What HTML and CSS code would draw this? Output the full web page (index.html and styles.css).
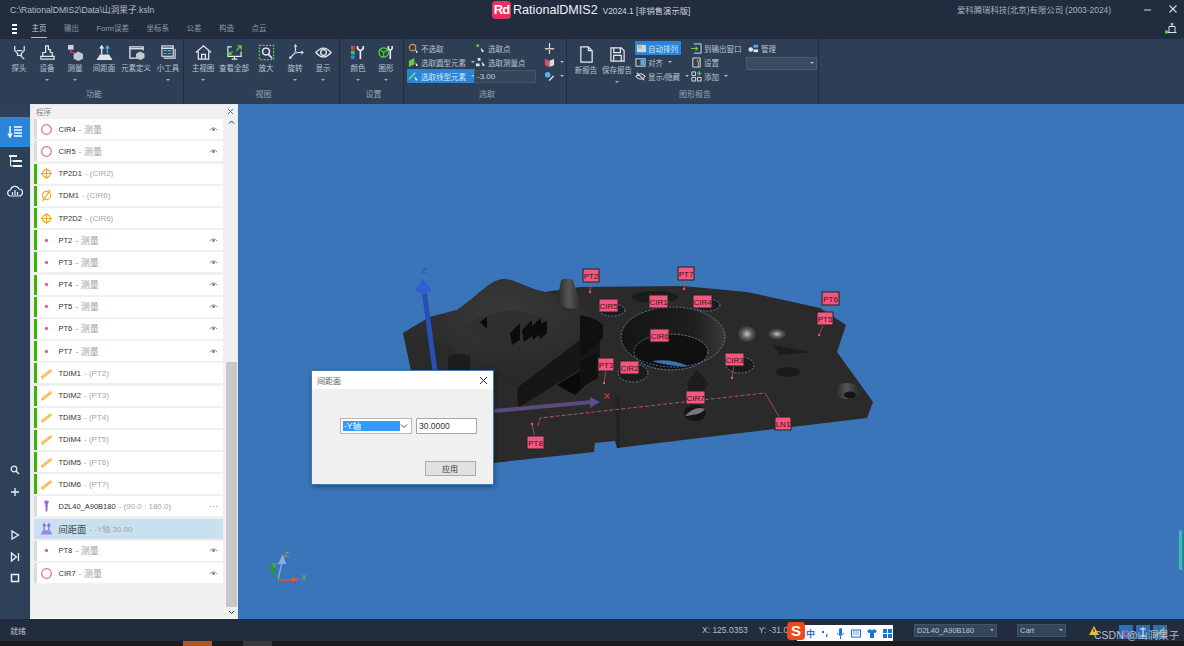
FILE: index.html
```html
<!DOCTYPE html>
<html lang="zh">
<head>
<meta charset="utf-8">
<title>RationalDMIS2</title>
<link rel="stylesheet" href="styles.css">
</head>
<body>
<svg class="defs" width="0" height="0" aria-hidden="true">
  <symbol id="i-ring" viewBox="0 0 14 14"><circle cx="7" cy="7" r="5.2" fill="none" stroke="#e4708e" stroke-width="1.3"/></symbol>
  <symbol id="i-tp" viewBox="0 0 14 14"><g fill="none" stroke="#f5a81c" stroke-width="1.2"><circle cx="7" cy="7" r="4.2"/><path d="M7 .8v12.4M.8 7h12.4"/></g></symbol>
  <symbol id="i-dia" viewBox="0 0 14 14"><g fill="none" stroke="#f5a81c" stroke-width="1.2"><circle cx="7" cy="7" r="4.4"/><path d="M3 13 11 1"/></g></symbol>
  <symbol id="i-dot" viewBox="0 0 14 14"><circle cx="7" cy="7" r="1.8" fill="#e4608a"/></symbol>
  <symbol id="i-rule" viewBox="0 0 14 14"><path d="M1 11 12 2.5M3 11.6 1.8 10M5 10 3.8 8.4M7 8.4 5.8 6.8M9 6.8 7.8 5.2M11 5.2 9.8 3.6M2 12.4 13 4" fill="none" stroke="#f5b030" stroke-width="1.1"/></symbol>
  <symbol id="i-probe" viewBox="0 0 14 14"><path d="M5 1h4L8 5 7.6 12h-1.2L6 5zM4.6 2.4 7 4M9.4 2.4 7 4" fill="#a070e8" stroke="#8a5ad8" stroke-width=".6"/></symbol>
  <symbol id="i-space" viewBox="0 0 14 14"><path d="M1 12h12v1.4H1zM3 9h8l1.4 3H1.6z" fill="#a57ce8"/><path d="M4.5 9V3M3 4.4 4.5 2 6 4.4M9.5 9V3M8 4.4 9.5 2 11 4.4" fill="none" stroke="#8d62dc" stroke-width="1.2"/></symbol>
  <symbol id="i-eye" viewBox="0 0 14 10"><path d="M1 6Q7-1 13 6" fill="none" stroke="#777" stroke-width="1.3"/><circle cx="7" cy="5.4" r="2" fill="#777"/></symbol>
</svg>

<header class="titlebar">
  <span class="path">C:\RationalDMIS2\Data\山洞果子.ksln</span>
  <div class="brand">
    <span class="logo">Rd</span>
    <span class="appname">RationalDMIS2</span>
    <span class="version">V2024.1 [非销售演示版]</span>
  </div>
  <span class="company">爱科腾瑞科技(北京)有限公司 (2003-2024)</span>
  <svg class="winbtn min" width="10" height="10" viewBox="0 0 10 10"><path d="M1 6h7" stroke="#b9c1cc" stroke-width="1.2"/></svg>
  <svg class="winbtn" width="10" height="10" viewBox="0 0 10 10"><path d="M1.5 1.5 8.5 8.5M8.5 1.5 1.5 8.5" stroke="#d5dae1" stroke-width="1.1"/></svg>
</header>

<nav class="tabs">
  <span class="burger"><i></i><i></i><i></i></span>
  <span class="tab active">主页</span>
  <span class="tab">输出</span>
  <span class="tab">Form误差</span>
  <span class="tab">坐标系</span>
  <span class="tab">公差</span>
  <span class="tab">构造</span>
  <span class="tab">点云</span>
  <svg class="tab-end" width="12" height="12" viewBox="0 0 12 12"><path d="M3 10.5h8.5M4 10V4.5h6V10M7 4.5V1M5.5 2h3" fill="none" stroke="#dfe5ec" stroke-width="1"/><rect x="0" y="8.5" width="3.4" height="3" fill="#48d830"/></svg>
</nav>

<section class="ribbon">
  <div class="group g-func">
    <div class="items">
      <div class="rb w28"><svg class="ic" viewBox="0 0 18 18"><path d="M4 2v5l3 3v2h4v-2l3-3V2M6 7h6M10 12l4 4" fill="none" stroke="#dfe6ee" stroke-width="1.3"/></svg><span>探头</span></div>
      <div class="rb w28 more"><svg class="ic" viewBox="0 0 18 18"><path d="M2 16h14v-3H2zM4 13V9h3V2h3v4h2v3h2v4" fill="none" stroke="#dfe6ee" stroke-width="1.3"/></svg><span>设备</span></div>
      <div class="rb w28 more"><svg class="ic" viewBox="0 0 18 18"><rect x="1" y="1" width="6" height="5" fill="#ccd2da"/><path d="M4 6v3h4" fill="none" stroke="#e4405e" stroke-width="1.2"/><path d="M12 8l5 2.5v5L12 18l-5-2.500v-5z" fill="#c4c9d0"/></svg><span>测量</span></div>
      <div class="rb w30"><svg class="ic" viewBox="0 0 18 18"><path d="M1 15h16v2H1zM4 11h10l2 4H2z" fill="#dfe6ee"/><path d="M6 11V3M4 5l2-3 2 3" fill="none" stroke="#dfe6ee" stroke-width="1.4"/><path d="M12 10V3M10 5l2-3 2 3" fill="none" stroke="#4aa8f0" stroke-width="1.4"/></svg><span>间距面</span></div>
      <div class="rb w34"><svg class="ic" viewBox="0 0 18 18"><path d="M10 15H2V3h14v4" fill="none" stroke="#dfe6ee" stroke-width="1.4"/><path d="M2 5h14" stroke="#dfe6ee" stroke-width="1.4"/><path d="M13 8l4.500 2.300v4.400L13 17l-4.500-2.300v-4.400z" fill="#c4c9d0"/></svg><span>元素定义</span></div>
      <div class="rb w30 more"><svg class="ic" viewBox="0 0 18 18"><rect x="2" y="2" width="12" height="11" fill="none" stroke="#dfe6ee" stroke-width="1.2"/><path d="M2 4.500h12" stroke="#dfe6ee" stroke-width="1.6"/><path d="M4 7h3M8 7h4M4 10h3M8 10h4" stroke="#58b0f0" stroke-width="1.2"/><path d="M16 5v10H4" fill="none" stroke="#dfe6ee" stroke-width="1.200"/></svg><span>小工具</span></div>
    </div>
    <div class="glabel">功能</div>
  </div>
  <div class="group g-view">
    <div class="items">
      <div class="rb w30 more"><svg class="ic" viewBox="0 0 18 18"><path d="M1 9 9 2l8 7M3.500 8v8h11V8M7 16v-5h4v5" fill="none" stroke="#e6ebf1" stroke-width="1.300"/></svg><span>主视图</span></div>
      <div class="rb w32"><svg class="ic" viewBox="0 0 18 18"><path d="M6 3H2v10h14V8M6 16h6M9 13v3" fill="none" stroke="#dfe6ee" stroke-width="1.300"/><path d="M11 7l5-5M12 2h4v4M7 8l-4 3M3 8v3h3" fill="none" stroke="#58d838" stroke-width="1.300"/></svg><span>查看全部</span></div>
      <div class="rb w32"><svg class="ic" viewBox="0 0 18 18"><rect x="1.500" y="1.500" width="15" height="15" fill="none" stroke="#58d838" stroke-width="1.300" stroke-dasharray="2 1.500"/><circle cx="8.500" cy="8" r="3.600" fill="none" stroke="#e6ebf1" stroke-width="1.500"/><path d="M11 11l4 4" stroke="#e6ebf1" stroke-width="1.600"/></svg><span>放大</span></div>
      <div class="rb w26 more"><svg class="ic" viewBox="0 0 18 18"><path d="M9 3v6M9 9l6 0M9 9l-5 5" fill="none" stroke="#dfe6ee" stroke-width="1.200"/><path d="M9 0 7 3h4zM18 9l-3-2v4zM2 16l1-3.500 2.500 2.500z" fill="#dfe6ee"/><circle cx="9" cy="9" r="1.700" fill="#58b0f0"/></svg><span>旋转</span></div>
      <div class="rb w30 more"><svg class="ic" viewBox="0 0 18 18"><path d="M1 9Q9-.500 17 9 9 18.500 1 9z" fill="none" stroke="#e6ebf1" stroke-width="1.300"/><circle cx="9" cy="9" r="3" fill="none" stroke="#e6ebf1" stroke-width="1.400"/></svg><span>显示</span></div>
    </div>
    <div class="glabel">视图</div>
  </div>
  <div class="group g-set">
    <div class="items">
      <div class="rb w28 more"><svg class="ic" viewBox="0 0 18 18"><rect x="1" y="2" width="4" height="4" fill="#e04040"/><rect x="1" y="7" width="4" height="4" fill="#40c840"/><rect x="1" y="12" width="4" height="4" fill="#3080e8"/><path d="M8 2v3l3 2 3-2V2M11 7v9" fill="none" stroke="#e6ebf1" stroke-width="1.800"/></svg><span>颜色</span></div>
      <div class="rb w28 more"><svg class="ic" viewBox="0 0 18 18"><circle cx="6" cy="9" r="5" fill="none" stroke="#58d838" stroke-width="1.300"/><path d="M2 6l4 3 4-3M6 9v5" fill="none" stroke="#58d838" stroke-width="1.100"/><path d="M11 2v3l2 2 2-2V2M13 7v9" fill="none" stroke="#e6ebf1" stroke-width="1.700"/></svg><span>图形</span></div>
    </div>
    <div class="glabel">设置</div>
  </div>
  <div class="group g-pick">
    <div class="items pick">
      <div class="col c1">
        <div class="ln"><svg class="mi" viewBox="0 0 12 12"><circle cx="5" cy="5" r="3.500" fill="none" stroke="#d8a030" stroke-width="1.300"/><path d="M8 7l3 3-2 1z" fill="#eee"/></svg>不选取</div>
        <div class="ln dd"><svg class="mi" viewBox="0 0 12 12"><path d="M1 4l6-3v7l-6 3z" fill="#68c848"/><path d="M8 6l3 3-2 1z" fill="#eee"/></svg>选取圆型元素</div>
        <div class="ln dd sel"><svg class="mi" viewBox="0 0 12 12"><path d="M1 9 8 2" stroke="#7ee860" stroke-width="1.500"/><path d="M7 6l3.500 3.500-2 1z" fill="#fff"/></svg>选取线型元素</div>
      </div>
      <div class="col c2">
        <div class="ln"><svg class="mi" viewBox="0 0 12 12"><circle cx="3" cy="3" r="1.600" fill="#68c848"/><path d="M6 5l4 4-2.500 1z" fill="#eee"/></svg>选取点</div>
        <div class="ln"><svg class="mi" viewBox="0 0 12 12"><path d="M3 1h3v3H3zM1 7h4v3H1z" fill="#dfe6ee"/><path d="M7 5l4 4-2.500 1z" fill="#eee"/></svg>选取测量点</div>
        <div class="ln"><span class="field">-3.00</span></div>
      </div>
      <div class="col c3">
        <div class="ln"><svg class="mi" viewBox="0 0 12 12"><path d="M6 0v12M1 6h10" stroke="#e8e8ee" stroke-width="1.200"/><path d="M1 7h10" stroke="#e05050" stroke-width="1.400"/></svg></div>
        <div class="ln dd"><svg class="mi" viewBox="0 0 12 12"><path d="M1 2l5 2v7l-5-2z" fill="#e05068"/><path d="M11 2 6 4v7l5-2z" fill="#d8dce2"/></svg></div>
        <div class="ln dd"><svg class="mi" viewBox="0 0 12 12"><circle cx="4" cy="4" r="3" fill="#58b0f0"/><path d="M5 10l5-5 1 1-5 5z" fill="#e6ebf1"/></svg></div>
      </div>
    </div>
    <div class="glabel">选取</div>
  </div>
  <div class="group g-report">
    <div class="items report">
      <div class="rb w30"><svg class="ic" viewBox="0 0 18 18"><path d="M3 1h8l4 4v12H3zM11 1v4h4" fill="none" stroke="#e6ebf1" stroke-width="1.300"/></svg><span>新报告</span></div>
      <div class="rb w32 more"><svg class="ic" viewBox="0 0 18 18"><path d="M2 2h11l3 3v11H2zM5 2v5h7V2M5 16v-6h8v6" fill="none" stroke="#e6ebf1" stroke-width="1.300"/></svg><span>保存报告</span></div>
      <div class="col c4">
        <div class="ln active"><svg class="mi" viewBox="0 0 12 12"><rect x="1" y="2" width="10" height="8" fill="#c8d8e8"/><rect x="2" y="3" width="4" height="3" fill="#e0b040"/></svg>自动排列</div>
        <div class="ln dd"><svg class="mi" viewBox="0 0 12 12"><rect x="1" y="2" width="10" height="8" fill="none" stroke="#dfe6ee"/><rect x="6" y="3" width="4" height="6" fill="#58b0f0"/></svg>对齐</div>
        <div class="ln dd"><svg class="mi" viewBox="0 0 12 12"><path d="M1 6Q6 0 11 6 6 12 1 6zM2 2l8 8" fill="none" stroke="#dfe6ee" stroke-width="1.100"/></svg>显示/隐藏</div>
      </div>
      <div class="col c5">
        <div class="ln"><svg class="mi" viewBox="0 0 12 12"><path d="M3 1h8v10H3" fill="none" stroke="#dfe6ee"/><path d="M0 6h7M5 4l2 2-2 2" fill="none" stroke="#58d838" stroke-width="1.200"/></svg>到输出窗口</div>
        <div class="ln"><svg class="mi" viewBox="0 0 12 12"><path d="M2 1h8v10H2z" fill="none" stroke="#dfe6ee"/><path d="M7 3v2l1 1 1-1V3M8 6v5" stroke="#e8c040" fill="none"/></svg>设置</div>
        <div class="ln dd"><svg class="mi" viewBox="0 0 12 12"><path d="M1 1h4v4H1zM1 7h4v4H1zM7 7h4v4H7z" fill="none" stroke="#dfe6ee"/><path d="M9 0v5M6.500 2.500h5" stroke="#58d838" stroke-width="1.200"/></svg>添加</div>
      </div>
      <div class="col c6">
        <div class="ln"><svg class="mi" viewBox="0 0 12 12"><circle cx="3" cy="7" r="2.500" fill="#dfe6ee"/><rect x="6" y="2" width="5" height="3" fill="#58b0f0"/><rect x="6" y="7" width="5" height="3" fill="#dfe6ee"/></svg>管理</div>
        <div class="ln"><span class="combo-r"></span></div>
      </div>
    </div>
    <div class="glabel">图形报告</div>
  </div>
</section>

<main class="work">
  <aside class="rail">
    <div class="rail-top">
      <div class="rail-btn on"><svg width="16" height="14" viewBox="0 0 16 14"><path d="M3 1v10M1 8.500 3 12l2-3.500" fill="none" stroke="#fff" stroke-width="1.400"/><path d="M7 2h8M7 5h8M7 8h8M7 11h8" stroke="#fff" stroke-width="1.500"/></svg></div>
      <div class="rail-btn"><svg width="14" height="14" viewBox="0 0 14 14"><path d="M1 1h8v2H1zM5 6h9v2H5zM5 11h9v2H5z" fill="#eef2f6"/><path d="M2.500 3v9H5M2.500 7H5" fill="none" stroke="#eef2f6"/></svg></div>
      <div class="rail-btn"><svg width="16" height="12" viewBox="0 0 16 12"><path d="M4 11a3 3 0 0 1-.500-6A4.500 4.500 0 0 1 12 4a3.500 3.500 0 0 1 0 7z" fill="none" stroke="#eef2f6" stroke-width="1.200"/><path d="M5.500 10V7M8 10V5M10.500 10V7" stroke="#eef2f6" stroke-width="1.200"/></svg></div>
    </div>
    <div class="rail-bottom">
      <svg class="r1" width="10" height="10" viewBox="0 0 10 10"><circle cx="4" cy="4" r="2.800" fill="none" stroke="#dde3ea" stroke-width="1.300"/><path d="M6 6l3 3" stroke="#dde3ea" stroke-width="1.500"/></svg>
      <svg class="r2" width="10" height="10" viewBox="0 0 10 10"><path d="M5 1v8M1 5h8" stroke="#eef2f6" stroke-width="1.300"/></svg>
      <svg class="r3" width="10" height="10" viewBox="0 0 10 10"><path d="M2 1 8.500 5 2 9z" fill="none" stroke="#eef2f6" stroke-width="1.300"/></svg>
      <svg class="r4" width="10" height="10" viewBox="0 0 10 10"><path d="M1.500 1 6.500 5 1.500 9zM8.500 1v8" fill="none" stroke="#eef2f6" stroke-width="1.300"/></svg>
      <svg class="r4" width="10" height="10" viewBox="0 0 10 10"><rect x="1.500" y="1.500" width="7" height="7" fill="none" stroke="#eef2f6" stroke-width="1.500"/></svg>
    </div>
  </aside>

  <section class="panel">
    <div class="panel-head"><span>程序</span><svg width="7" height="7" viewBox="0 0 7 7"><path d="M1 1l5 5M6 1 1 6" stroke="#3a78b0" stroke-width="1"/></svg></div>
    <div class="panel-body">
      <div class="list">
        <div class="row"><svg class="ri"><use href="#i-ring"/></svg><b>CIR4</b><em>- 测量</em><svg class="eye"><use href="#i-eye"/></svg></div>
        <div class="row"><svg class="ri"><use href="#i-ring"/></svg><b>CIR5</b><em>- 测量</em><svg class="eye"><use href="#i-eye"/></svg></div>
        <div class="row ok"><svg class="ri"><use href="#i-tp"/></svg><b>TP2D1</b><i>- (CIR2)</i></div>
        <div class="row ok"><svg class="ri"><use href="#i-dia"/></svg><b>TDM1</b><i>- (CIR6)</i></div>
        <div class="row ok"><svg class="ri"><use href="#i-tp"/></svg><b>TP2D2</b><i>- (CIR6)</i></div>
        <div class="row ok"><svg class="ri"><use href="#i-dot"/></svg><b>PT2</b><em>- 测量</em><svg class="eye"><use href="#i-eye"/></svg></div>
        <div class="row ok"><svg class="ri"><use href="#i-dot"/></svg><b>PT3</b><em>- 测量</em><svg class="eye"><use href="#i-eye"/></svg></div>
        <div class="row ok"><svg class="ri"><use href="#i-dot"/></svg><b>PT4</b><em>- 测量</em><svg class="eye"><use href="#i-eye"/></svg></div>
        <div class="row ok"><svg class="ri"><use href="#i-dot"/></svg><b>PT5</b><em>- 测量</em><svg class="eye"><use href="#i-eye"/></svg></div>
        <div class="row ok"><svg class="ri"><use href="#i-dot"/></svg><b>PT6</b><em>- 测量</em><svg class="eye"><use href="#i-eye"/></svg></div>
        <div class="row ok"><svg class="ri"><use href="#i-dot"/></svg><b>PT7</b><em>- 测量</em><svg class="eye"><use href="#i-eye"/></svg></div>
        <div class="row ok"><svg class="ri"><use href="#i-rule"/></svg><b>TDIM1</b><i>- (PT2)</i></div>
        <div class="row ok"><svg class="ri"><use href="#i-rule"/></svg><b>TDIM2</b><i>- (PT3)</i></div>
        <div class="row ok"><svg class="ri"><use href="#i-rule"/></svg><b>TDIM3</b><i>- (PT4)</i></div>
        <div class="row ok"><svg class="ri"><use href="#i-rule"/></svg><b>TDIM4</b><i>- (PT5)</i></div>
        <div class="row ok"><svg class="ri"><use href="#i-rule"/></svg><b>TDIM5</b><i>- (PT6)</i></div>
        <div class="row ok"><svg class="ri"><use href="#i-rule"/></svg><b>TDIM6</b><i>- (PT7)</i></div>
        <div class="row"><svg class="ri"><use href="#i-probe"/></svg><b>D2L40_A90B180</b><i>- (90.0 : 180.0)</i><span class="dots">···</span></div>
        <div class="row cur"><svg class="ri"><use href="#i-space"/></svg><strong>间距面</strong><i>- -Y轴 30.00</i></div>
        <div class="row"><svg class="ri"><use href="#i-dot"/></svg><b>PT8</b><em>- 测量</em><svg class="eye"><use href="#i-eye"/></svg></div>
        <div class="row"><svg class="ri"><use href="#i-ring"/></svg><b>CIR7</b><em>- 测量</em><svg class="eye"><use href="#i-eye"/></svg></div>
      </div>
      <div class="scroll">
        <svg class="sb-arrow" width="11" height="11" viewBox="0 0 11 11"><path d="M3 6.500 5.500 4 8 6.500" fill="none" stroke="#333" stroke-width="1"/></svg>
        <div class="sb-track"><div class="sb-thumb"></div></div>
        <svg class="sb-arrow" width="11" height="11" viewBox="0 0 11 11"><path d="M3 4 5.500 6.500 8 4" fill="none" stroke="#333" stroke-width="1"/></svg>
      </div>
    </div>
  </section>

  <section class="viewport">
    <svg class="scene" viewBox="238 104 946 515" width="946" height="515">
      <defs>
        <radialGradient id="g-bump" cx=".5" cy=".25" r=".7"><stop offset="0" stop-color="#383838"/><stop offset="1" stop-color="#282828"/></radialGradient>
        <linearGradient id="g-cone" x1="0" x2="1"><stop offset="0" stop-color="#262626"/><stop offset=".5" stop-color="#555"/><stop offset="1" stop-color="#2a2a2a"/></linearGradient>
        <radialGradient id="g-ball" cx=".5" cy=".5" r=".5"><stop offset="0" stop-color="#c4c4c4"/><stop offset=".5" stop-color="#5e5e5e"/><stop offset="1" stop-color="#262626"/></radialGradient>
        <linearGradient id="g-hole" x1="0" x2="1"><stop offset="0" stop-color="#151515"/><stop offset=".7" stop-color="#1e1e1e"/><stop offset="1" stop-color="#3a3a3a"/></linearGradient>
      </defs>
      <path d="M403 333 430 317 457 310C475 298 490 280 503 279 515 279 530 290 545 292L580 287 683 286 747 292 820 308 846 325 837 352 873 402 867 418 617 448 615 441 595 443 594 452 493 463 440 470 415 390Z" fill="#2a2a2a"/>
      <path d="M403 333 430 317 457 310C475 298 490 280 503 279 515 279 530 290 545 292L575 300 600 322 517 388C500 378 470 370 450 345Z" fill="url(#g-bump)"/>
      <path d="M517 388 600 325V357L518 408Z" fill="#161616"/>
      <path d="M557 385 598 360V373L575 395Z" fill="#0a0a0a"/>
      <path d="M580 315Q595 317 603 325V338L580 358Z" fill="#101010"/>
      <path d="M580 362 598 352V378L580 388Z" fill="#101010"/>
      <path d="M468 325 480 317 510 310 545 317 548 330 520 345 490 342Z" fill="#2f2f2f"/>
      <path d="M480 322 487 317V329ZM510 333 520 323V340L512 345ZM522 330 532 320V336L524 342ZM531 327 541 318V333L533 340ZM537 325 547 321V333L540 339Z" fill="#0b0b0b"/>
      <path d="M557 302 561 280Q567 277 573 280L581 307Q568 312 557 302Z" fill="url(#g-cone)"/>
      <path d="M448 356Q459 352 470 356V372H448Z" fill="#1c1c1c"/>
      <path d="M617 448 615 396 620 395 620 448Z" fill="#232323"/>
      <ellipse cx="655" cy="297" rx="23" ry="6" fill="#1b1b1b"/>
      <ellipse cx="673" cy="337" rx="52" ry="30" fill="url(#g-hole)"/>
      <ellipse cx="671" cy="352" rx="37" ry="17" fill="#101010"/>
      <path d="M652 361Q670 358 688 366 670 367 652 361Z" fill="#3b75b9"/>
      <ellipse cx="673" cy="337" rx="52" ry="30" class="dash-b"/>
      <ellipse cx="671" cy="352" rx="37" ry="18" class="dash-b"/>
      <ellipse cx="612" cy="310" rx="13" ry="6" fill="#1b1b1b" class="dash-b"/>
      <ellipse cx="707" cy="305" rx="13" ry="6" fill="#1b1b1b" class="dash-b"/>
      <ellipse cx="633" cy="373" rx="15" ry="9" fill="#1b1b1b" class="dash-b"/>
      <ellipse cx="740" cy="365" rx="14" ry="8" fill="#1b1b1b" class="dash-b"/>
      <ellipse cx="788" cy="372" rx="12" ry="5" fill="#1a1a1a"/>
      <ellipse cx="747" cy="334" rx="10" ry="9" fill="url(#g-ball)"/>
      <ellipse cx="777" cy="334" rx="10" ry="6" fill="url(#g-ball)"/>
      <path d="M773 345 812 352 780 355Z" fill="#1c1c1c"/>
      <ellipse cx="847" cy="391" rx="12" ry="8" fill="url(#g-cone)"/>
      <ellipse cx="850" cy="395" rx="6" ry="3.500" fill="#141414"/>
      <path d="M687 382 697 370 708 383 702 396 690 396Z" fill="#1c1c1c"/>
      <ellipse cx="695" cy="413" rx="11" ry="8" fill="#151515"/>
      <path d="M685 416Q695 405 705 409 702 414 692 415 688 416 685 416Z" fill="#777"/>

      <path d="M424 290 435 371" stroke="#2650b8" stroke-width="5"/>
      <path d="M415 290 423 279 431 290 424 295Z" fill="#2f5fd0"/>
      <text class="axis-z" x="424" y="273">Z</text>
      <path d="M493 411 592 402" stroke="#5a4a80" stroke-width="4"/>
      <path d="M590 397 600 402 590 408Z" fill="#56508c"/>
      <path d="M604.500 393.500 609.500 398.500M609.500 393.500 604.500 398.500" stroke="#c83040" stroke-width="1.200"/>

      <path d="M538 426 540 418 765 393" class="dash-p"/>
      <path d="M765 393 780 418M532 424 535 437M591 281 590 292M686 279 684 289M830 303 825 318M824 323 819 335M734 365 732 378M606 369 604 383" class="lead"/>
      <circle cx="590" cy="292" r="1.200" fill="#e05878"/><circle cx="684" cy="289" r="1.200" fill="#e05878"/><circle cx="819" cy="335" r="1.200" fill="#e05878"/><circle cx="732" cy="378" r="1.200" fill="#e05878"/><circle cx="604" cy="383" r="1.200" fill="#e05878"/><circle cx="532" cy="424" r="1.200" fill="#e05878"/>

      <g class="tag">
        <rect x="583" y="269" width="16" height="13"/><text x="591" y="278.500">PT2</text>
        <rect x="678" y="267" width="16" height="13"/><text x="686" y="276.500">PT7</text>
        <rect x="599" y="299" width="19" height="13"/><text x="608.500" y="308.500">CIR5</text>
        <rect x="649" y="295" width="19" height="13"/><text x="658.500" y="304.500">CIR1</text>
        <rect x="693" y="295" width="19" height="13"/><text x="702.500" y="304.500">CIR4</text>
        <rect x="822" y="292" width="17" height="13"/><text x="830.500" y="301.500">PT6</text>
        <rect x="817" y="312" width="16" height="13"/><text x="825" y="321.500">PT5</text>
        <rect x="650" y="329" width="19" height="13"/><text x="659.500" y="338.500">CIR6</text>
        <rect x="598" y="358" width="16" height="13"/><text x="606" y="367.500">PT3</text>
        <rect x="620" y="361" width="19" height="13"/><text x="629.500" y="370.500">CIR2</text>
        <rect x="725" y="353" width="19" height="13"/><text x="734.500" y="362.500">CIR3</text>
        <rect x="686" y="391" width="19" height="13"/><text x="695.500" y="400.500">CIR7</text>
        <rect x="775" y="417" width="16" height="13"/><text x="783" y="426.500">LN1</text>
        <rect x="527" y="436" width="17" height="13"/><text x="535.500" y="445.500">PT8</text>
      </g>

      <path d="M278 580 282 562" stroke="#7fa4e8" stroke-width="1.500"/>
      <path d="M278 564 283 554 286 564Z" fill="#86aef0"/>
      <path d="M278 580 273 570" stroke="#2c9a3c" stroke-width="1.500"/>
      <path d="M270 567 273 563 276 572 271 573Z" fill="#1c9a30"/>
      <path d="M278 580H294" stroke="#d0583a" stroke-width="1.500"/>
      <path d="M292 577 300 579.500 292 582Z" fill="#ea5424"/>
      <text class="tri" x="284" y="557">Z</text><text class="tri" x="274" y="568" text-anchor="middle">Y</text><text class="tri" x="301" y="580">X</text>
      <rect x="1179" y="530" width="3" height="40" rx="1.500" fill="#35c0a8"/>
    </svg>

    <div class="dialog">
      <div class="dlg-head"><span>间距面</span><svg width="9" height="9" viewBox="0 0 9 9"><path d="M1 1l7 7M8 1 1 8" stroke="#333" stroke-width="1"/></svg></div>
      <div class="dlg-body">
        <div class="dlg-line">
          <div class="dlg-select"><span>-Y轴</span><svg width="8" height="6" viewBox="0 0 8 6"><path d="M1 1.500 4 4.500 7 1.500" fill="none" stroke="#555"/></svg></div>
          <div class="dlg-input">30.0000</div>
        </div>
        <div class="dlg-foot"><button class="dlg-btn" type="button">应用</button></div>
      </div>
    </div>
  </section>
</main>

<footer class="status">
  <span class="st-ready">就绪</span>
  <div class="st-coords"><span>X: 125.0353</span><span>Y: -31.0</span></div>
  <span class="combo wide">D2L40_A90B180</span>
  <span class="combo narrow">Cart</span>
  <div class="st-tail">
    <svg class="warn" width="10" height="9" viewBox="0 0 10 9"><path d="M5 0 10 9H0Z" fill="#f0c020"/><path d="M5 3v3" stroke="#222"/></svg>
    <span class="mark">CSDN @山洞果子</span>
    <div class="tray">
      <span class="tray-b"><svg width="12" height="12" viewBox="0 0 12 12"><path d="M2 10h8M4 10V5h4v5" stroke="#e05a78" fill="none"/></svg></span>
      <span class="tray-b"><svg width="12" height="12" viewBox="0 0 12 12"><path d="M6 1v10M3 10h6M3 3h6" stroke="#e8f0f8" fill="none"/></svg></span>
      <span class="tray-b"><svg width="12" height="12" viewBox="0 0 12 12"><path d="M2 10 10 2" stroke="#70e060" stroke-width="1.500"/></svg></span>
    </div>
  </div>
  <div class="ime">
    <span class="ime-logo">S</span>
    <span class="ime-zh">中</span>
    <svg width="9" height="9" viewBox="0 0 9 9"><circle cx="2" cy="3" r="1.200" fill="#1c70d8"/><path d="M6 5 5.500 8" stroke="#1c70d8" stroke-width="1.400"/></svg>
    <svg width="9" height="11" viewBox="0 0 9 11"><rect x="3" y="0" width="3" height="7" rx="1.500" fill="#1c70d8"/><path d="M1 5q3.500 5 7 0M4.500 8v3" fill="none" stroke="#1c70d8"/></svg>
    <svg width="10" height="9" viewBox="0 0 10 9"><rect x=".5" y="1" width="9" height="7" fill="none" stroke="#1c70d8"/><path d="M2 3h6M2 5h6" stroke="#1c70d8" stroke-dasharray="1 .6"/></svg>
    <svg width="10" height="9" viewBox="0 0 10 9"><path d="M3 0 0 2l1.500 2L3 3.500V9h4V3.500L8.500 4 10 2 7 0 5 1.500Z" fill="#1c70d8"/></svg>
    <svg width="9" height="9" viewBox="0 0 9 9"><path d="M0 0h4v4H0zM5 0h4v4H5zM0 5h4v4H0zM5 5h4v4H5z" fill="#1c70d8"/></svg>
  </div>
</footer>
<div class="strip"><span class="s-orange"></span><span class="s-grey"></span></div>
</body>
</html>
```
FILE: styles.css
```css
* { box-sizing: border-box; }
html, body { margin: 0; padding: 0; }
body {
  width: 1184px;
  height: 646px;
  overflow: hidden;
  display: flex;
  flex-direction: column;
  background: #222c3f;
  font-family: "Liberation Sans", "Noto Sans CJK SC", sans-serif;
  font-size: 8px;
  color: #c4cbd4;
}
.defs { position: absolute; }

.titlebar {
  height: 20px;
  flex: none;
  display: flex;
  align-items: center;
  padding: 0 6px 2px 10px;
  font-size: 8px;
  color: #b3bac5;
  position: relative;
}
.path { flex: 1; font-size: 8.650px; }
.brand {
  position: absolute;
  left: 492px;
  top: 0;
  display: flex;
  align-items: center;
  height: 19px;
}
.logo {
  width: 19px;
  height: 18px;
  border-radius: 4px;
  background: #e8305c;
  color: #fff;
  font-weight: 700;
  font-size: 13px;
  line-height: 18px;
  text-align: center;
  letter-spacing: -1px;
}
.appname { margin-left: 2px; font-size: 12.600px; color: #eef1f5; }
.version { margin-left: 5px; font-size: 8.300px; color: #d0d5dc; }
.company { margin-right: 32px; font-size: 8.400px; color: #a9b0bb; }
.winbtn { display: block; }
.winbtn.min { margin-right: 15px; }

.tabs {
  height: 19px;
  flex: none;
  display: flex;
  align-items: center;
  position: relative;
  padding-bottom: 1px;
}
.burger {
  width: 5px;
  margin-left: 12px;
  margin-right: 14px;
  display: flex;
  flex-direction: column;
  gap: 2px;
}
.burger i { display: block; height: 2px; background: #fff; }
.tab {
  margin-right: 16.500px;
  height: 18px;
  line-height: 18px;
  font-size: 7.500px;
  color: #8f99a8;
  padding: 0 0.5px;
}
.tab.active {
  color: #c6ccd5;
  box-shadow: inset 0 -1px 0 #f0c020;
}
.tab-end { position: absolute; left: 1165px; top: 2px; }

.ribbon {
  height: 65px;
  flex: none;
  display: flex;
  background: #2e3f55;
}
.group {
  display: flex;
  flex-direction: column;
  border-right: 1px solid #222c3f;
}
.g-func { width: 184px; padding-left: 5px; }
.g-view { width: 156px; padding-left: 4px; }
.g-set { width: 64px; padding-left: 4px; }
.g-pick { width: 163px; padding-left: 4px; }
.g-report { width: 252px; padding-left: 5px; }
.items { display: flex; height: 44px; flex: none; }
.glabel {
  flex: 1;
  display: flex;
  align-items: center;
  justify-content: center;
  font-size: 8px;
  color: #99a4b3;
}
.rb {
  display: flex;
  flex-direction: column;
  align-items: center;
  padding-top: 5px;
  font-size: 7.500px;
  color: #bcc4cf;
  white-space: nowrap;
  position: relative;
}
.rb span { margin-top: 2px; line-height: 11px; }
.rb.more::after {
  content: "";
  position: absolute;
  top: 40px;
  left: 50%;
  margin-left: -2px;
  border: 2px solid transparent;
  border-top: 2.500px solid #9fb0c4;
}
.w26 { width: 26px; }
.w28 { width: 28px; }
.w30 { width: 30px; }
.w32 { width: 32px; }
.w34 { width: 34px; }
.ic { width: 17px; height: 17px; display: block; }

.pick, .report { padding-top: 2px; }
.col { display: flex; flex-direction: column; }
.ln {
  height: 15px;
  display: flex;
  align-items: center;
  gap: 2px;
  font-size: 7.500px;
  color: #bcc4cf;
  white-space: nowrap;
}
.mi { width: 11px; height: 11px; flex: none; display: block; }
.ln.dd::after {
  content: "";
  margin-left: 3px;
  border: 2px solid transparent;
  border-top: 2.500px solid #b0bcca;
  margin-top: 2px;
}
.c1 { width: 67px; }
.c2 { width: 66px; }
.c3 { padding-left: 3px; }
.sel { background: #2a84d8; color: #dbe8f5; margin-left: -1px; padding-left: 1px; }
.field {
  width: 62px;
  height: 13px;
  margin-left: -1px;
  padding-left: 2px;
  line-height: 11px;
  background: #34465c;
  border: 1px solid #445569;
  color: #c8cfd8;
  font-size: 8px;
}
.report .rb:first-child { margin-left: -1px; }
.c4 { margin-left: 2px; width: 56px; }
.c4 .active {
  width: 46px;
  background: #2a84d8;
  color: #d5e6f7;
  padding-left: 1px;
  gap: 1px;
}
.c5 { width: 57px; }
.combo-r {
  width: 71px;
  height: 13px;
  margin-left: -2px;
  background: #3a4b61;
  border: 1px solid #4b5b6f;
  position: relative;
}
.combo-r::after, .combo::after {
  content: "";
  position: absolute;
  right: 2px;
  top: 4px;
  border: 2px solid transparent;
  border-top: 2.500px solid #a8b8ca;
}

.work { height: 515px; flex: none; display: flex; }
.rail {
  width: 30px;
  flex: none;
  background: #2f4059;
  padding-top: 13px;
  display: flex;
  flex-direction: column;
  justify-content: space-between;
}
.rail-btn {
  height: 29.500px;
  display: flex;
  align-items: center;
  justify-content: center;
}
.rail-btn.on { background: #2a84d8; }
.rail-bottom {
  display: flex;
  flex-direction: column;
  align-items: center;
  padding-bottom: 36px;
}
.r1 { margin-bottom: 12px; }
.r2 { margin-bottom: 33px; }
.r3 { margin-bottom: 12px; }
.r4 { margin-bottom: 11px; }
.rail-bottom svg:last-child { margin-bottom: 0; }

.panel {
  width: 208px;
  flex: none;
  background: #f0f0f0;
  border: 1px solid #e6e8ea;
  border-bottom-color: #fff;
  display: flex;
  flex-direction: column;
}
.panel-head {
  height: 12px;
  flex: none;
  display: flex;
  align-items: center;
  justify-content: space-between;
  padding: 1px 3px 0 5px;
  font-size: 7.500px;
  color: #888;
}
.panel-body { flex: 1; display: flex; min-height: 0; }
.list {
  flex: 1;
  padding: 2.300px 3px 0 3px;
  display: flex;
  flex-direction: column;
  gap: 2.200px;
}
.row {
  height: 20px;
  flex: none;
  display: flex;
  align-items: center;
  background: #fff;
  border-left: 3px solid #dcdcdc;
  font-size: 7.500px;
  position: relative;
  padding-right: 3px;
}
.row.ok { border-left-color: #3cb500; }
.row.cur { background: #c8e0f0; border-left-color: #c8e0f0; }
.ri { width: 13px; height: 13px; margin: 0 5.500px 0 3px; flex: none; }
.row b { font-weight: 400; color: #2c2f35; }
.row em { font-style: normal; margin-left: 3px; color: #a2a2a2; font-size: 9px; }
.row i { font-style: normal; margin-left: 3px; color: #a6a6a6; font-size: 8px; }
.row strong { font-weight: 400; font-size: 9.300px; color: #444; }
.eye { width: 9px; height: 7px; margin-left: auto; margin-right: 2px; }
.dots { margin-left: auto; margin-right: 2px; color: #888; font-size: 9px; }
.scroll {
  width: 11px;
  flex: none;
  display: flex;
  flex-direction: column;
  align-items: center;
  background: #f0f0f0;
}
.sb-arrow { flex: none; display: block; }
.sb-track { flex: 1; width: 100%; padding-top: 234px; display: flex; }
.sb-thumb { flex: 1; background: #c8c8c8; }

.viewport {
  flex: 1;
  position: relative;
  background: #3b75b9;
  overflow: hidden;
}
.scene { display: block; }
.dash-b { stroke: #6f9ed0; stroke-width: .7; stroke-dasharray: 2 1.500; fill: none; }
ellipse.dash-b[fill] { fill: #1b1b1b; }
.dash-p { fill: none; stroke: #d65a7a; stroke-width: .8; stroke-dasharray: 4 2; }
.lead { fill: none; stroke: #b84c68; stroke-width: .8; }
.tag rect { fill: #f2577e; stroke: #222; stroke-width: 1; }
.tag text {
  font-size: 8px;
  fill: #3c1422;
  text-anchor: middle;
}
.axis-z { font-size: 8px; fill: #2050c8; text-anchor: middle; }
.tri { font-size: 8px; fill: #a8a050; }

.dialog {
  position: absolute;
  left: 73px;
  top: 266px;
  width: 182.500px;
  height: 115px;
  background: #f0f0f0;
  border: 1px solid #3d7ab8;
  box-shadow: 1px 2px 5px rgba(0, 0, 0, .35);
  display: flex;
  flex-direction: column;
}
.dlg-head {
  height: 18px;
  flex: none;
  background: #fff;
  display: flex;
  align-items: center;
  justify-content: space-between;
  padding: 0 5px;
  font-size: 8px;
  color: #555;
}
.dlg-body {
  flex: 1;
  display: flex;
  flex-direction: column;
  padding: 29px 16px 8px 28px;
}
.dlg-line { display: flex; gap: 4px; height: 16px; }
.dlg-select {
  width: 72px;
  background: #fff;
  border: 1px solid #b8b8b8;
  padding: 2px;
  display: flex;
  align-items: center;
  justify-content: space-between;
  font-size: 8.500px;
}
.dlg-select span {
  width: 57px;
  height: 100%;
  background: #3399ff;
  color: #fff;
  padding-left: 1px;
  line-height: 10px;
}
.dlg-select svg { margin-right: 1px; }
.dlg-input {
  width: 61px;
  background: #fff;
  border: 1px solid #a8a8a8;
  font-size: 8.500px;
  line-height: 14px;
  padding-left: 2px;
  color: #333;
}
.dlg-foot { margin-top: auto; display: flex; justify-content: flex-end; padding-right: 1px; }
.dlg-btn {
  width: 51px;
  height: 15px;
  padding: 0;
  background: #e1e1e1;
  border: 1px solid #adadad;
  font: 8px "Liberation Sans", "Noto Sans CJK SC", sans-serif;
  color: #333;
}

.status {
  height: 22px;
  flex: none;
  display: flex;
  align-items: center;
  position: relative;
  background: #222c3f;
  font-size: 8px;
  color: #b4bbc6;
}
.st-ready { flex: 1; padding-left: 10px; }
.st-coords { width: 212px; display: flex; gap: 11px; font-size: 8.500px; }
.combo {
  height: 13px;
  line-height: 11px;
  padding-left: 2px;
  background: #34465c;
  border: 1px solid #44556a;
  position: relative;
  color: #bcc4cf;
  font-size: 7.500px;
}
.combo.wide { width: 83px; margin-right: 20px; }
.combo.narrow { width: 49px; }
.st-tail {
  width: 118px;
  height: 100%;
  position: relative;
  display: flex;
  align-items: center;
  padding-left: 23px;
}
.warn { flex: none; }
.mark {
  position: absolute;
  left: 28px;
  top: 8px;
  font-size: 10.500px;
  color: #b8bcc4;
  white-space: nowrap;
  z-index: 1;
}
.tray {
  position: absolute;
  left: 53px;
  top: 6px;
  display: flex;
  gap: 3px;
}
.tray-b {
  width: 14px;
  height: 14px;
  background: #2a70b8;
  display: flex;
  align-items: center;
  justify-content: center;
}
.ime {
  position: absolute;
  left: 797px;
  top: 6px;
  width: 96px;
  height: 16px;
  background: #fff;
  display: flex;
  align-items: center;
  gap: 6px;
  padding-left: 9px;
}
.ime-logo {
  position: absolute;
  left: -10px;
  top: -3px;
  width: 18px;
  height: 18px;
  border-radius: 4px;
  background: #ef4a1c;
  color: #fff;
  font-weight: 700;
  font-size: 15px;
  line-height: 18px;
  text-align: center;
}
.ime-zh { color: #1c70d8; font-size: 9px; font-weight: 700; }

.strip {
  flex: 1;
  background: #1b1b1b;
  display: flex;
}
.s-orange { width: 29px; margin-left: 183px; background: #a85a28; }
.s-grey { width: 29px; margin-left: 31px; background: #3a3a3a; }
```
